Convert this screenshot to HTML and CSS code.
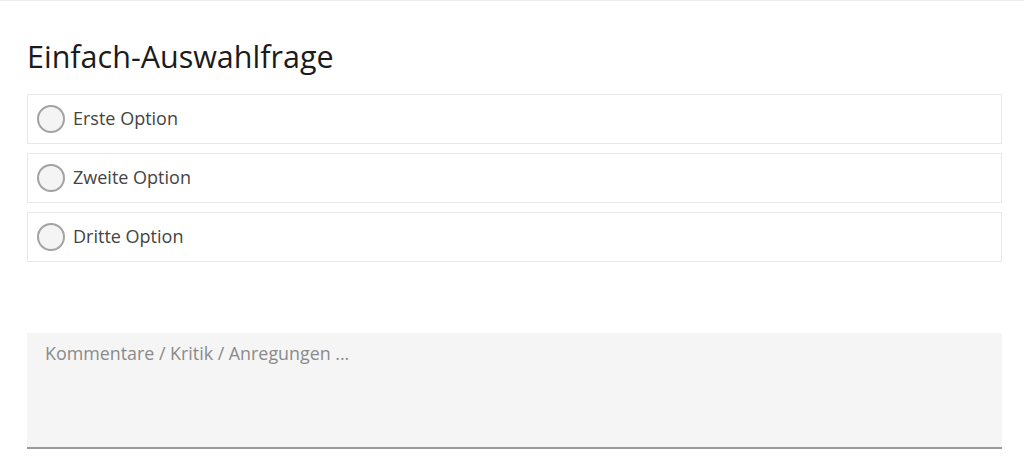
FILE: index.html
```html
<!DOCTYPE html>
<html lang="de">
<head>
<meta charset="utf-8">
<title>Einfach-Auswahlfrage</title>
<link rel="stylesheet" href="styles.css">
</head>
<body>
<div class="topline"></div>
<main class="question">
  <h1 class="title">Einfach-Auswahlfrage</h1>
  <div class="options">
    <label class="option"><span class="radio"></span><span class="label">Erste Option</span></label>
    <label class="option"><span class="radio"></span><span class="label">Zweite Option</span></label>
    <label class="option"><span class="radio"></span><span class="label">Dritte Option</span></label>
  </div>
  <textarea class="comment" placeholder="Kommentare / Kritik / Anregungen ..."></textarea>
</main>
</body>
</html>
```
FILE: styles.css
```css
* { box-sizing: border-box; }
html, body { margin: 0; padding: 0; background: #fff; }
body { font-family: "Open Sans", "Liberation Sans", sans-serif; }
.topline { height: 1px; background: #ececec; }
.question {
  padding: 35px 22px 0 27px;
  display: flex;
  flex-direction: column;
}
.title {
  margin: 0 0 1px;
  font-size: 30.5px;
  font-weight: 400;
  line-height: 40px;
  color: #1b1b1b;
}
.options {
  margin-top: 17px;
  display: flex;
  flex-direction: column;
  gap: 9px;
}
.option {
  height: 50px;
  border: 1px solid #e8e8e8;
  display: flex;
  align-items: center;
  padding-left: 9px;
  gap: 8px;
}
.radio {
  width: 28px;
  height: 28px;
  border-radius: 50%;
  border: 2px solid #a3a3a3;
  background: #f4f4f4;
  flex: none;
}
.label {
  font-size: 18px;
  line-height: 24px;
  padding-bottom: 2px;
  color: #444;
}
.comment {
  margin-top: 71px;
  height: 116px;
  width: 100%;
  resize: none;
  border: none;
  border-bottom: 2px solid #9a9a9a;
  background: #f5f5f5;
  padding: 8px 18px;
  font-family: "Open Sans", "Liberation Sans", sans-serif;
  font-size: 17.85px;
  line-height: 24px;
  color: #444;
  outline: none;
  display: block;
}
.comment::placeholder { color: #8a8a8a; opacity: 1; }
```
